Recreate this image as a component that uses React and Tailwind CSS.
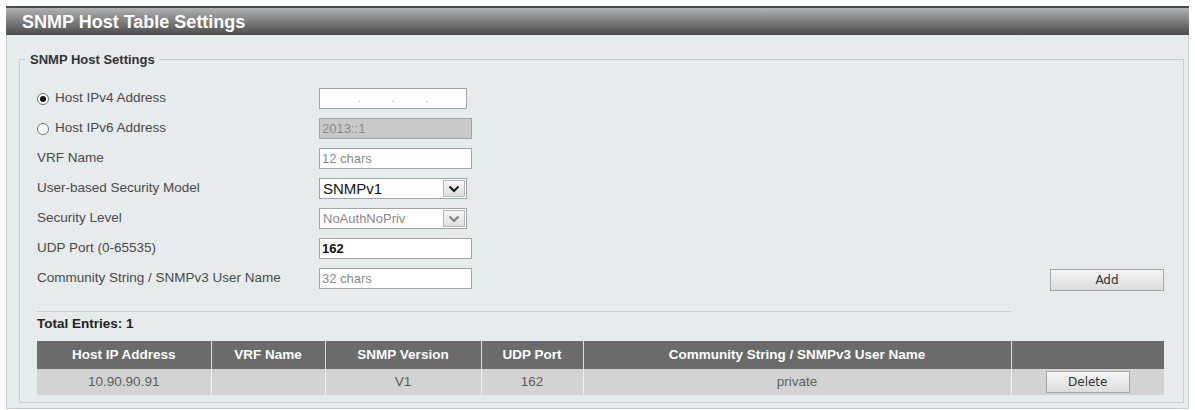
import { useState } from "react";

const FONT = { fontFamily: '"Liberation Sans", Arial, sans-serif' };

const Radio = ({ checked, onClick }) => {
  return (
    <span
      onClick={onClick}
      className="inline-flex items-center justify-center w-[12px] h-[12px] rounded-full border border-[#6f7579] bg-white mr-[6px] cursor-pointer"
    >
      {checked && <span className="w-[6px] h-[6px] rounded-full bg-[#111]" />}
    </span>
  );
};

const Row = ({ label, children, right }) => {
  return (
    <div className="flex items-center h-[30px]">
      <div className="w-[282px] flex items-center text-[13.5px] text-[#4a4a4a]">{label}</div>
      <div className="flex-1 flex items-center">{children}</div>
      {right}
    </div>
  );
};

const TextBox = ({ value, placeholder, wide = true, disabled, bold }) => {
  return (
    <input
      readOnly
      value={value}
      placeholder={placeholder}
      className={`h-[21px] ${wide ? "w-[153px]" : "w-[148px]"} border border-[#9ea6aa] px-[2px] text-[13px] outline-none placeholder:text-[#8c8c8c] ${
        disabled ? "bg-[#c9c9c9] text-[#8a8a8a]" : "bg-white text-[#111]"
      } ${bold ? "font-bold" : ""}`}
      style={FONT}
    />
  );
};

const Chevron = ({ color }) => (
  <svg width="12" height="8" viewBox="0 0 12 8">
    <path d="M1.5 1.5 L6 6 L10.5 1.5" fill="none" stroke={color} strokeWidth="2.2" />
  </svg>
);

const SelectBox = ({ value, disabled }) => {
  return (
    <div
      className={`h-[21px] w-[148px] border border-[#9ea6aa] bg-white flex items-center ${
        disabled ? "text-[#8a8a8a] text-[13px]" : "text-[#111] text-[15px]"
      }`}
    >
      <span className="flex-1 px-[3px] leading-none">{value}</span>
      <span className="w-[22px] h-[17px] mr-[1px] flex items-center justify-center border border-[#b4b9bc] bg-gradient-to-b from-[#f7f7f7] to-[#dedede]">
        <Chevron color={disabled ? "#7a8186" : "#1a1a1a"} />
      </span>
    </div>
  );
};

const Button = ({ children, className }) => {
  return (
    <button
      className={`h-[22px] border border-[#a2a7aa] bg-gradient-to-b from-[#f6f6f6] to-[#dcdcdc] text-[#333] ${className}`}
      style={{ fontFamily: '"DejaVu Sans", Verdana, sans-serif', fontSize: "12px" }}
    >
      {children}
    </button>
  );
};

const hosts = [
  { ip: "10.90.90.91", vrf: "", version: "V1", port: "162", community: "private" },
];

export default function App() {
  const [ipv6, setIpv6] = useState(false);

  return (
    <div className="bg-white h-[410px] pt-[6px] px-[6px] overflow-hidden" style={FONT}>
      <div className="h-[29px] border-t-2 border-[#3e4b52] bg-gradient-to-b from-[#b2b2b2] via-[#7d7d7d] to-[#4c4c4c] flex items-center pl-[16px]">
        <h1 className="text-white font-bold text-[18px] leading-none">SNMP Host Table Settings</h1>
      </div>

      <div className="bg-[#e6ebed] border-x border-b border-[#c9d1d4] pl-[12px] pr-[7px] pt-[15px] pb-[5px]">
        <fieldset className="border border-[#c6ced1] pl-[17px] pr-[19px] pb-[7px]">
          <legend className="-ml-[12px] px-[5px] text-[13px] font-bold text-[#333]">SNMP Host Settings</legend>

          <div className="pt-[14px]">
            <Row
              label={
                <>
                  <Radio checked={!ipv6} onClick={() => setIpv6(false)} />
                  Host IPv4 Address
                </>
              }
            >
              <div className="h-[21px] w-[148px] border border-[#9ea6aa] bg-white flex items-center justify-around px-[22px] text-[10px] text-[#aaa]">
                <span>.</span>
                <span>.</span>
                <span>.</span>
              </div>
            </Row>
            <Row
              label={
                <>
                  <Radio checked={ipv6} onClick={() => setIpv6(true)} />
                  Host IPv6 Address
                </>
              }
            >
              <TextBox value="2013::1" disabled />
            </Row>
            <Row label="VRF Name">
              <TextBox placeholder="12 chars" />
            </Row>
            <Row label="User-based Security Model">
              <SelectBox value="SNMPv1" />
            </Row>
            <Row label="Security Level">
              <SelectBox value="NoAuthNoPriv" disabled />
            </Row>
            <Row label="UDP Port (0-65535)">
              <TextBox value="162" bold />
            </Row>
            <Row
              label="Community String / SNMPv3 User Name"
              right={<Button className="w-[114px] mt-[2px]">Add</Button>}
            >
              <TextBox placeholder="32 chars" />
            </Row>
          </div>

          <div className="mt-[17px] w-[974px] border-t border-[#c6ced1]" />
          <div className="pt-[2px] pb-[7px] text-[13.5px] font-bold text-[#222]">Total Entries: 1</div>

          <table className="w-[1127px] border-collapse text-[13.5px]">
            <thead>
              <tr className="h-[28px] bg-[#6b6b6b] text-white font-bold">
                <th className="w-[174px] border-r border-[#e0e0e0]">Host IP Address</th>
                <th className="w-[114px] border-r border-[#e0e0e0]">VRF Name</th>
                <th className="w-[156px] border-r border-[#e0e0e0]">SNMP Version</th>
                <th className="w-[102px] border-r border-[#e0e0e0]">UDP Port</th>
                <th className="w-[428px] border-r border-[#e0e0e0]">Community String / SNMPv3 User Name</th>
                <th className="w-[153px]"></th>
              </tr>
            </thead>
            <tbody>
              {hosts.map((h) => (
                <tr key={h.ip} className="h-[26px] bg-[#d3d3d3] text-[#5e5e5e] text-center">
                  <td className="border-r border-[#f0f0f0]">{h.ip}</td>
                  <td className="border-r border-[#f0f0f0]">{h.vrf}</td>
                  <td className="border-r border-[#f0f0f0]">{h.version}</td>
                  <td className="border-r border-[#f0f0f0]">{h.port}</td>
                  <td className="border-r border-[#f0f0f0]">{h.community}</td>
                  <td>
                    <Button className="w-[84px] align-middle">Delete</Button>
                  </td>
                </tr>
              ))}
            </tbody>
          </table>
        </fieldset>
      </div>
    </div>
  );
}
